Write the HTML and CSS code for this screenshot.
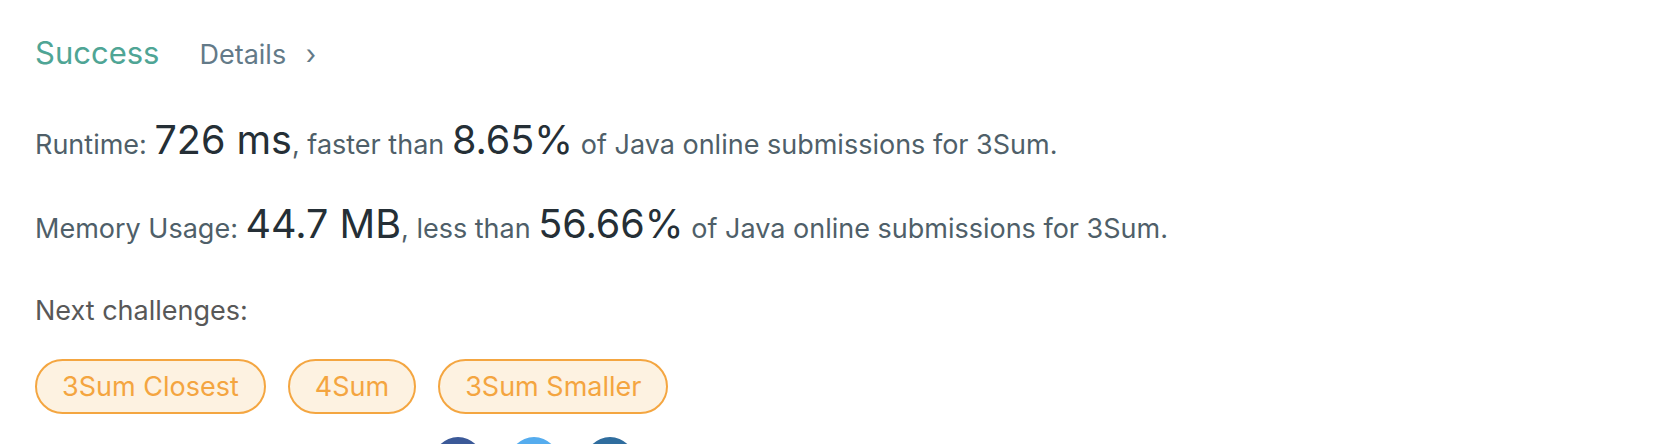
FILE: index.html
```html
<!DOCTYPE html>
<html lang="en">
<head>
<meta charset="utf-8">
<title>Submission result</title>
<link rel="stylesheet" href="styles.css">
</head>
<body>
<div class="result">
  <div class="result-header">
    <span class="status">Success</span>
    <a class="details" href="#">Details <span class="chev">›</span></a>
  </div>
  <p class="stat">Runtime: <span class="big">726 ms</span>, faster than <span class="big">8.65%</span> of Java online submissions for 3Sum.</p>
  <p class="stat">Memory Usage: <span class="big">44.7 MB</span>, less than <span class="big">56.66%</span> of Java online submissions for 3Sum.</p>
  <p class="next-label">Next challenges:</p>
  <div class="pills">
    <a class="pill" href="#">3Sum Closest</a>
    <a class="pill" href="#">4Sum</a>
    <a class="pill" href="#">3Sum Smaller</a>
  </div>
  <div class="share">
    <span class="circle fb"></span>
    <span class="circle tw"></span>
    <span class="circle li"></span>
  </div>
</div>
</body>
</html>
```
FILE: styles.css
```css
html, body {
  margin: 0;
  padding: 0;
  background: #ffffff;
}
body {
  font-family: Inter, "Noto Sans", sans-serif;
  overflow: hidden;
}
.result {
  padding: 30px 0 0 35px;
}
.result-header {
  display: flex;
  align-items: baseline;
  gap: 40px;
  height: 46px;
}
.status {
  font-size: 31px;
  color: #4fa595;
  line-height: 46px;
}
.details {
  font-size: 27px;
  color: #637a88;
  text-decoration: none;
}
.chev {
  margin-left: 12px;
}
.stat {
  margin: 0;
  font-size: 27px;
  color: #4f5f69;
  line-height: 40px;
}
.stat:first-of-type {
  margin-top: 44px;
}
.stat + .stat {
  margin-top: 39px;
}
.big {
  font-size: 39.5px;
  color: #252f36;
}
.next-label {
  margin: 42px 0 0;
  font-size: 27px;
  line-height: 40px;
  color: #585858;
}
.pills {
  display: flex;
  gap: 22px;
  margin-top: 28px;
}
.pill {
  display: inline-flex;
  align-items: center;
  height: 51px;
  padding: 0 25px;
  border: 2px solid #f4a641;
  border-radius: 28px;
  background: #fdf2e1;
  color: #f4a540;
  font-size: 27px;
  text-decoration: none;
}
.share {
  display: flex;
  gap: 26px;
  margin: 23px 0 0 398px;
}
.circle {
  width: 50px;
  height: 50px;
  border-radius: 50%;
}
.fb { background: #3b5998; }
.tw { background: #55acee; }
.li { background: #2f6d9e; }
```
